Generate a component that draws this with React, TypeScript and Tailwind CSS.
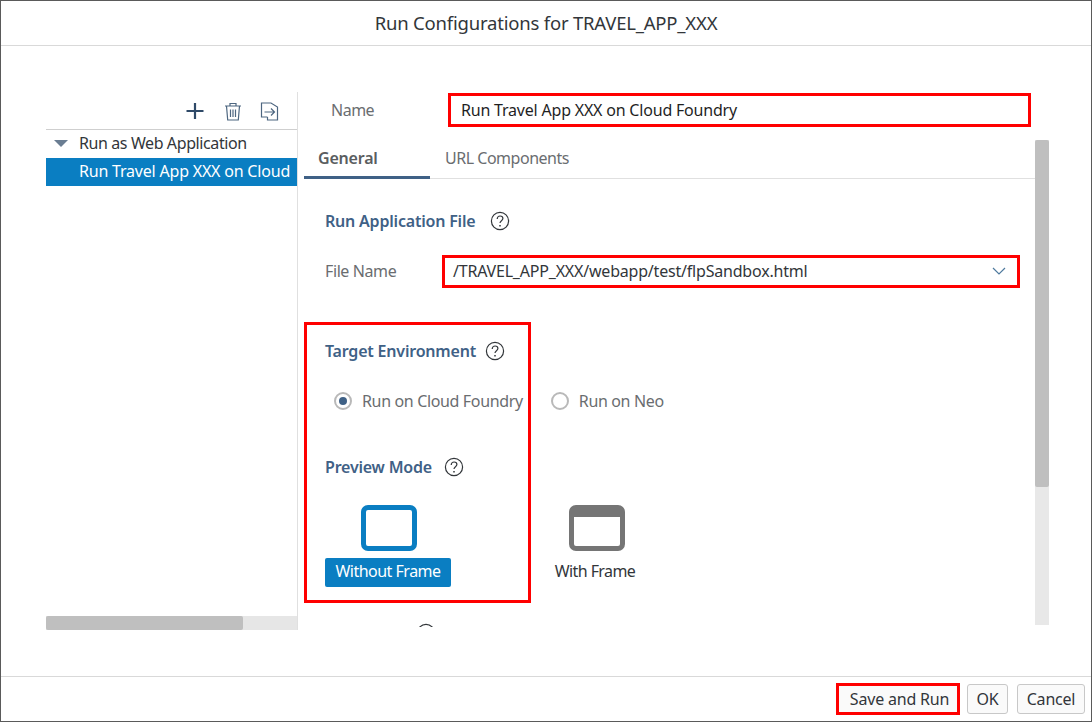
const font = "[font-family:'Noto_Sans','Open_Sans',sans-serif]";

function HelpIcon() {
    return (
        <svg width="20" height="20" viewBox="0 0 20 20" fill="none" stroke="#32363a" strokeWidth="1.2">
            <circle cx="10" cy="10" r="8.6" />
            <path d="M7.2 8c0-1.8 1.2-3 2.9-3s2.8 1.1 2.8 2.5c0 2.2-2.9 2.3-2.9 4.6" />
            <path d="M10 14v1.4" strokeWidth="1.5" />
        </svg>
    );
}

function SectionTitle({ label, gap }: { label: string; gap: string }) {
    return (
        <div className={`flex items-center ${gap}`}>
            <span className="text-[16px] leading-5 font-semibold text-[#3f6186] whitespace-nowrap">{label}</span>
            <HelpIcon />
        </div>
    );
}

function Radio({ label, checked }: { label: string; checked?: boolean }) {
    return (
        <div className="flex items-center gap-[10px] whitespace-nowrap">
            <span className="w-[18px] h-[18px] rounded-full border-2 border-[#b9b9b9] bg-white flex items-center justify-center">
                {checked && <span className="w-[8px] h-[8px] rounded-full bg-[#3f6186]" />}
            </span>
            <span className="text-[16px] leading-5 text-[#6a6d70] tracking-[-0.35px]">{label}</span>
        </div>
    );
}

export default function App() {
    return (
        <div className={`${font} w-[1092px] h-[722px] bg-white flex flex-col border border-[#5a5a5a] overflow-hidden tracking-[-0.2px]`}>
            <div className="h-[45px] shrink-0 border-b border-[#d9d9d9] flex items-center justify-center text-[18.5px] text-[#32363a]">
                Run Configurations for TRAVEL_APP_XXX
            </div>

            <div className="flex-1 flex min-h-0 pl-[45px] pt-[46px]">
                {/* left tree */}
                <div className="w-[252px] h-[538px] shrink-0 border-r border-[#e0e0e0] flex flex-col">
                    <div className="h-[38px] shrink-0 border-b border-[#cfcfcf] flex items-start justify-end gap-[18px] pr-[18px] pt-[10px]">
                        <svg className="mr-[2px]" width="18" height="18" viewBox="0 0 18 18" fill="none" stroke="#2f4a68" strokeWidth="2.2">
                            <path d="M9 1v16M0.5 9h17" />
                        </svg>
                        <svg width="18" height="19" viewBox="0 0 18 19" fill="none" stroke="#4d6680" strokeWidth="1.2">
                            <path d="M1 4h16M6 4V1.5h6V4M2.5 4l1.2 14h10.6l1.2-14M6.5 7.5v7.5M9 7.5v7.5M11.5 7.5v7.5" />
                        </svg>
                        <svg width="19" height="19" viewBox="0 0 19 19" fill="none" stroke="#4d6680" strokeWidth="1.2">
                            <path d="M7.5 15H1.5V1H11l6.5 4v13H7.5V15M4.5 10h10M11 6.5l3.5 3.5-3.5 3.5" />
                        </svg>
                    </div>
                    <div className="h-[28px] flex items-center pl-[8px] pb-[2px] text-[16px] text-[#32363a] whitespace-nowrap tracking-[-0.4px]">
                        <span className="w-0 h-0 border-x-[7px] border-x-transparent border-t-[7px] border-t-[#6a7d92]" />
                        <span className="ml-[11px]">Run as Web Application</span>
                    </div>
                    <div className="h-[28px] bg-[#0a7ec2] text-white text-[16px] flex items-center pl-[33px] pb-[2px] whitespace-nowrap">
                        Run Travel App XXX on Cloud
                    </div>
                    <div className="flex-1" />
                    <div className="h-[14px] bg-[#e6e6e6]">
                        <div className="h-full w-[197px] bg-[#bfbfbf] rounded-[2px]" />
                    </div>
                </div>

                {/* right form */}
                <div className="flex-1 min-w-0 flex flex-col pl-[6px]">
                    <div className="h-[34px] shrink-0 flex items-center mt-[1px]">
                        <span className="w-[144px] pl-[27px] text-[16px] text-[#6a6d70] tracking-[-0.5px]">Name</span>
                        <div className="w-[583px] h-[34px] border-[3px] border-[#ff0000] flex items-center pl-[10px] pb-[1px] text-[16px] text-[#1f1f1f] whitespace-nowrap">
                            Run Travel App XXX on Cloud Foundry
                        </div>
                    </div>
                    <div className="flex w-[745px] flex-1 min-h-0 mt-[13px]">
                        <div className="w-[731px] flex flex-col min-h-0 overflow-hidden">
                            <div className="h-[39px] shrink-0 border-b border-[#e0e0e0] flex text-[16px]">
                                <div className="w-[126px] h-[39px] border-b-[3px] border-[#3f6186] pl-[14px] pt-[6px] font-semibold text-[#5a5d60]">General</div>
                                <div className="pl-[15px] pt-[6px] text-[#6a6d70] tracking-[-0.48px]">URL Components</div>
                            </div>
                            <div className="pl-[21px] pt-[32px]">
                                <SectionTitle label="Run Application File" gap="gap-[15px]" />
                            </div>
                            <div className="flex items-center mt-[24px] pl-[21px]">
                                <span className="w-[117px] pb-[2px] text-[16px] text-[#6a6d70] tracking-[-0.4px]">File Name</span>
                                <div className="w-[578px] h-[33px] border-[3px] border-[#ff0000] flex items-center justify-between pl-[8px] pr-[11px] pb-[1px] text-[16px] text-[#32363a]">
                                    /TRAVEL_APP_XXX/webapp/test/flpSandbox.html
                                    <svg width="14" height="8" viewBox="0 0 14 8" fill="none" stroke="#4f7a9e" strokeWidth="1.2">
                                        <path d="M1 1l6 6 6-6" />
                                    </svg>
                                </div>
                            </div>
                            <div className="w-[227px] h-[281px] shrink-0 mt-[34px] border-[3px] border-[#ff0000] pl-[18px] pt-[16px]">
                                <SectionTitle label="Target Environment" gap="gap-[9px]" />
                                <div className="flex gap-[28px] w-max mt-[30px] ml-[9px]">
                                    <Radio label="Run on Cloud Foundry" checked />
                                    <Radio label="Run on Neo" />
                                </div>
                                <div className="mt-[46px]">
                                    <SectionTitle label="Preview Mode" gap="gap-[12px]" />
                                </div>
                                <div className="flex w-max mt-[28px]">
                                    <div className="w-[126px] flex flex-col items-center">
                                        <div className="ml-[1px] w-[56px] h-[46px] rounded-[7px] border-[5px] border-[#0a7ec2]" />
                                        <div className="mt-[7px] w-[126px] h-[29px] pb-[3px] rounded-[2px] bg-[#0a7ec2] text-white text-[16px] tracking-[-0.5px] flex items-center justify-center">Without Frame</div>
                                    </div>
                                    <div className="ml-[118px] w-[56px] flex flex-col items-center">
                                        <div className="w-[56px] h-[46px] shrink-0 rounded-[7px] border-[5px] border-t-[12px] border-[#757575]" />
                                        <div className="mt-[7px] h-[29px] pb-[3px] pr-[4px] flex items-center text-[16px] text-[#32363a] whitespace-nowrap tracking-[-0.6px]">With Frame</div>
                                    </div>
                                </div>
                            </div>
                            <div className="h-[4px] mt-[20px] ml-[112px] overflow-hidden shrink-0">
                                <HelpIcon />
                            </div>
                        </div>
                        <div className="w-[14px] h-[485px] shrink-0 bg-[#e8e8e8]">
                            <div className="h-[347px] bg-[#bfbfbf] rounded-[2px]" />
                        </div>
                    </div>
                </div>
            </div>

            <div className="h-[45px] shrink-0 border-t border-[#d9d9d9] flex items-center justify-end pr-[6px] text-[16px] text-[#32363a]">
                <div className="h-[32px] w-[124px] border-[3px] border-[#ff0000] bg-[#fafafa] pl-[3px] flex items-center justify-center">Save and Run</div>
                <div className="h-[30px] w-[41px] ml-[7px] border border-[#c8c8c8] rounded-[3px] bg-[#fafafa] flex items-center justify-center">OK</div>
                <div className="h-[30px] w-[68px] ml-[9px] border border-[#c8c8c8] rounded-[3px] bg-[#fafafa] flex items-center justify-center">Cancel</div>
            </div>
        </div>
    );
}
